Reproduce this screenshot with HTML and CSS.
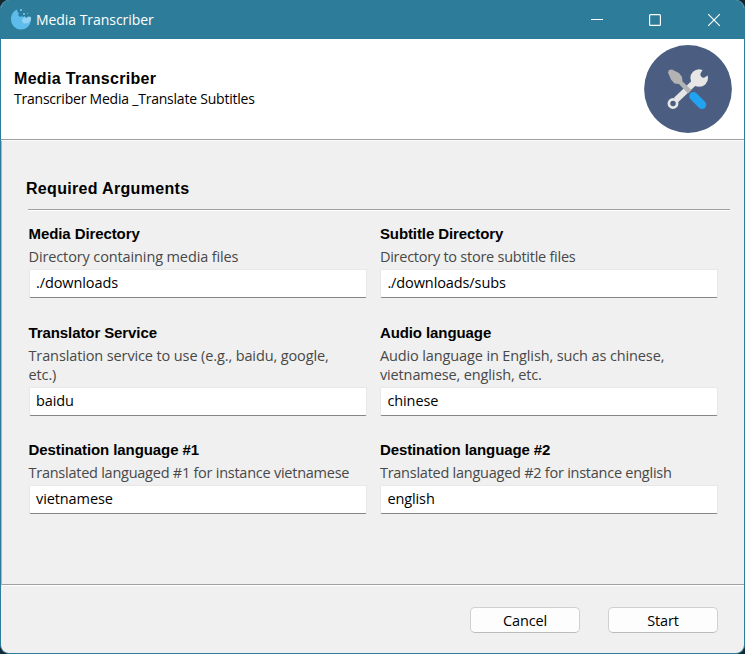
FILE: index.html
```html
<!DOCTYPE html>
<html lang="en">
<head>
<meta charset="utf-8">
<title>Media Transcriber</title>
<link rel="stylesheet" href="styles.css">
</head>
<body>
<div class="window">
  <header class="titlebar">
    <svg class="app-icon" width="22" height="22" viewBox="0 0 22 22">
      <path d="M7 1.500C3.500 3 1 6.500 1 11a10 10 0 0 0 20 1V9h-3.500l-1.500 1-1-2-2 1-1-1-2 1-2-2 1-2-1.500-1z" fill="#5dbcec"/>
      <path d="M12 12l2-3 2.500 1.500 1.500-2 3 .5v3l-2.500 3-4 .5-2-1z" fill="#91d2f3"/>
      <path d="M10 1h2v2h-2zM13 5h2v2h-2zM17 5h1v1h-1z" fill="#5dbcec"/>
    </svg>
    <span class="title">Media Transcriber</span>
    <svg class="controls" width="130" height="14" viewBox="0 0 130 14" fill="none" stroke="#fff" stroke-width="1.150">
      <path d="M0 6.500h12"/><rect x="58.600" y="1.600" width="10.800" height="10.800" rx="1"/><path d="M117.200 1.200l11.600 11.600M128.800 1.200l-11.600 11.600"/>
    </svg>
  </header>
  <section class="banner">
    <div>
      <h1>Media Transcriber</h1>
      <p class="subtitle">Transcriber Media _Translate Subtitles</p>
    </div>
    <svg class="tools" width="88" height="88" viewBox="0 0 88 88">
      <circle cx="44" cy="44" r="43.900" fill="#4b5e82"/>
      <path d="M32 55L52 36" stroke="#e6e6e6" stroke-width="6"/>
      <circle cx="29" cy="58.500" r="4.100" fill="none" stroke="#e6e6e6" stroke-width="2.700"/>
      <circle cx="55.200" cy="33" r="8.800" fill="#e6e6e6"/>
      <path d="M60 22.500L56.500 28.500A3.200 3.200 0 0 0 60.500 32.500L66 29z" fill="#4b5e82"/>
      <path d="M24 27.500l1-2.500 3-.5 7 3.500 3 4 .5 4.500L47.500 45l-3.500 3.500-9-9.500-4.500-.5-3.500-4z" fill="#b3b3b3"/>
      <path d="M49.500 51.200l8.500 8.500" stroke="#21a3f1" stroke-width="8.500" stroke-linecap="round"/>
    </svg>
  </section>
  <main class="content">
    <h2>Required Arguments</h2>
    <div class="fields">
      <label class="field"><b>Media Directory</b><span class="desc wide">Directory containing media files</span><input value="./downloads"></label>
      <label class="field"><b>Subtitle Directory</b><span class="desc">Directory to store subtitle files</span><input value="./downloads/subs"></label>
      <label class="field"><b>Translator Service</b><span class="desc wide">Translation service to use (e.g., baidu, google,<br>etc.)</span><input value="baidu"></label>
      <label class="field"><b>Audio language</b><span class="desc wide">Audio language in English, such as chinese,<br>vietnamese, english, etc.</span><input value="chinese"></label>
      <label class="field"><b>Destination language #1</b><span class="desc">Translated languaged #1 for instance vietnamese</span><input value="vietnamese"></label>
      <label class="field"><b>Destination language #2</b><span class="desc">Translated languaged #2 for instance english</span><input value="english"></label>
    </div>
  </main>
  <footer class="actions"><button>Cancel</button><button>Start</button></footer>
</div>
</body>
</html>
```
FILE: styles.css
```css
* { box-sizing: border-box; }
body { margin: 0; background: #142832; font-family: "Open Sans", "Noto Sans", sans-serif; overflow: hidden; }
h1, h2, p { margin: 0; }
.window { width: 745px; height: 654px; display: flex; flex-direction: column; background: #f0f0f0; border: 1px solid #2d7d9a; border-top: 0; border-radius: 9px; overflow: hidden; }
.titlebar { height: 39px; flex: none; display: flex; align-items: center; background: #2d7d9a; padding: 0 23px 0 9px; }
.app-icon { margin-bottom: 2px; }
.title { color: #fff; font-size: 14px; letter-spacing: -.05px; margin-left: 4px; }
.controls { margin-left: auto; }
.banner { height: 102px; flex: none; display: flex; justify-content: space-between; background: #fff; border-bottom: 1px solid #fafafa; box-shadow: inset 0 -1px #a0a0a0; padding: 6px 12px 0; }
h1 { font: bold 16px/20px "Liberation Sans", sans-serif; margin: 24px 0 0 1px; letter-spacing: .32px; }
.subtitle { font-size: 14px; line-height: 20px; letter-spacing: -.22px; padding-left: 1px; }
.content { height: 445px; flex: none; padding: 38px 14px 0 25px; border-left: 1px solid #b4b4b4; border-bottom: 1px solid #fff; box-shadow: inset 0 -1px #a0a0a0; }
h2 { font: bold 16px/20px "Liberation Sans", sans-serif; letter-spacing: .32px; padding-bottom: 10px; margin-left: -1px; }
.fields { display: grid; grid-template-columns: 338px 338px; column-gap: 13.4px; row-gap: 24.6px; border-top: 1px solid #a0a0a0; box-shadow: inset 0 1px #fff; padding: 14px 0 0 .5px; margin-left: 1px; }
.field { display: flex; flex-direction: column; }
.field b { font: bold 15px/19px "Liberation Sans", sans-serif; letter-spacing: -.09px; color: #000; }
.desc { font-size: 14.5px; line-height: 19px; letter-spacing: -.25px; color: #484848; margin: 4px 0 3px; }
.desc.wide { letter-spacing: -.12px; }
input { width: 338px; height: 29px; border: 1px solid #e8e8e8; border-bottom: 1px solid #868686; border-radius: 2px; padding: 0 6.5px 2px; font: 14.5px "Open Sans", sans-serif; letter-spacing: -.1px; color: #000; background: #fff; outline: 0; }
.actions { display: flex; gap: 28px; justify-content: flex-end; padding: 21px 26px 0; }
button { width: 110px; height: 26px; border: 1px solid #d0d0d0; border-bottom-color: #bbb; border-radius: 5px; background: #fdfdfd; font: 14.5px "Open Sans", sans-serif; letter-spacing: -.15px; color: #000; padding: 0; }
```
